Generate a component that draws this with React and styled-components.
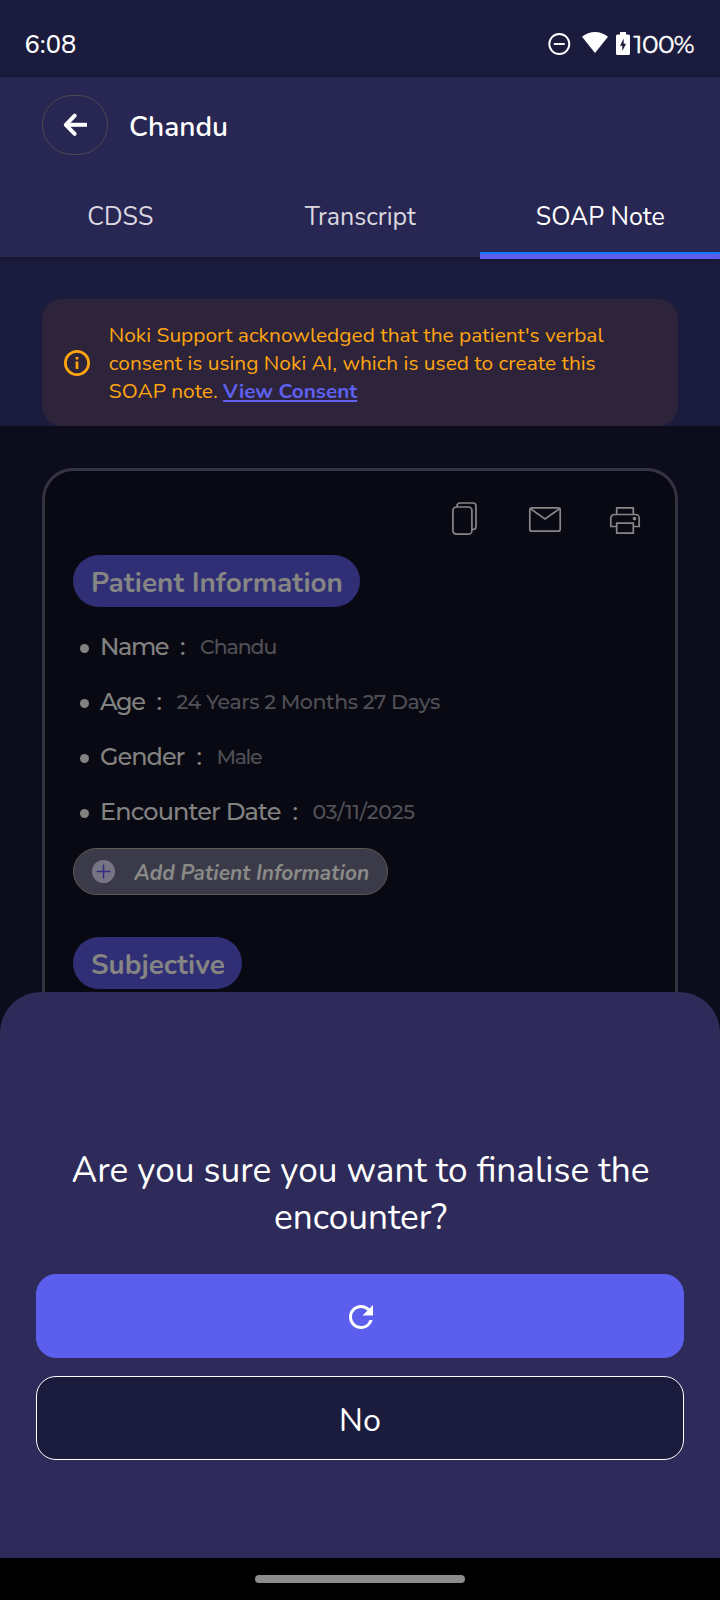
import React from 'react';
import styled, { createGlobalStyle } from 'styled-components';

const GlobalStyle = createGlobalStyle`
  *, *::before, *::after { box-sizing: border-box; }
  body { margin: 0; background: #000; }
  button { font: inherit; color: inherit; margin: 0; padding: 0; border: 0; background: none; }
`;

const textFont = "'Nunito', 'Lato', sans-serif";
const dataFont = "'Montserrat', 'Lato', sans-serif";

const Screen = styled.div`
  position: relative;
  width: 720px;
  height: 1600px;
  overflow: hidden;
  display: flex;
  flex-direction: column;
  background: #0d0c1d;
  font-family: ${textFont};
  color: #fff;
`;

const StatusBar = styled.div`
  flex: none;
  height: 77px;
  padding: 10px 26px 0 24px;
  display: flex;
  align-items: center;
  justify-content: space-between;
  background: #1b1b3d;
`;

const Clock = styled.span`
  padding: 2px 0 0 0.5px;
  font: 500 25.4px/30px ${textFont};
`;

const StatusIcons = styled.div`
  display: flex;
  align-items: center;
`;

const BatteryLevel = styled.span`
  margin-left: 4px;
  font: 400 25px/30px ${dataFont};
  letter-spacing: -0.6px;
  -webkit-text-stroke: 0.4px #fff;
`;

const Header = styled.header`
  position: relative;
  z-index: 1;
  flex: none;
  height: 180px;
  padding-top: 18px;
  display: flex;
  flex-direction: column;
  background: #282652;
  box-shadow: 0 2px 6px rgba(8, 8, 30, 0.35);
`;

const TitleRow = styled.div`
  flex: none;
  height: 60px;
  padding-left: 42px;
  display: flex;
  gap: 21px;
`;

const BackButton = styled.button`
  width: 66px;
  height: 60px;
  display: flex;
  align-items: center;
  justify-content: center;
  border: 1px solid #4c4a50;
  border-radius: 30px;
`;

const PatientName = styled.h1`
  margin: 0;
  padding-top: 3px;
  font-size: 28.1px;
  font-weight: 600;
  line-height: 58px;
`;

const Tabs = styled.nav`
  margin-top: auto;
  display: grid;
  grid-template-columns: repeat(3, 1fr);
`;

const Tab = styled.button`
  position: relative;
  height: 80px;
  padding-left: 0.6px;
  font-size: 25px;
  line-height: 34px;
  color: ${(p) => (p.$active ? '#fff' : '#dcd8e0')};

  &::after {
    content: '';
    display: ${(p) => (p.$active ? 'block' : 'none')};
    position: absolute;
    left: 0;
    right: 0;
    bottom: -2px;
    height: 7px;
    border-top: 2px solid #107cf8;
    background: #5f5df0;
  }
`;

const ConsentArea = styled.section`
  flex: none;
  padding: 42px 42px 0;
  background: #1b1b3d;
`;

const ConsentNotice = styled.div`
  height: 127px;
  padding-left: 22px;
  display: flex;
  align-items: center;
  gap: 18.8px;
  border-radius: 20px;
  background: #2d243b;
`;

const ConsentText = styled.p`
  margin: 0;
  width: 505px;
  font-size: 20.9px;
  line-height: 28px;
  color: #ffa510;
`;

const ConsentLink = styled.a`
  font-size: 20.7px;
  font-weight: 700;
  color: #5f60f0;
  text-decoration: underline;
  text-decoration-thickness: 1.5px;
  text-underline-offset: 2px;
`;

const NoteCard = styled.main`
  flex: 1;
  margin: 42px 42px 0;
  padding: 26px 28px 0;
  display: flex;
  flex-direction: column;
  align-items: flex-start;
  border: 3px solid #343341;
  border-bottom: 0;
  border-radius: 31px 31px 0 0;
  background: #090914;
`;

const NoteActions = styled.div`
  align-self: flex-end;
  width: 188px;
  height: 42px;
  margin-right: 7px;
  display: flex;
  align-items: center;
  justify-content: space-between;
`;

const SectionPill = styled.h2`
  flex: none;
  height: 52px;
  margin: ${(p) => p.$top}px 0 0;
  padding: 4px 17.5px 0 18px;
  border-radius: 26px;
  background: #302f76;
  color: #858583;
  font-size: 27.9px;
  font-weight: 700;
  line-height: 49px;
`;

const Facts = styled.ul`
  margin: 12px 0 9px;
  padding: 0 0 0 6px;
  list-style: none;
`;

const Fact = styled.li`
  height: 55px;
  display: flex;
  align-items: center;
  font: 500 20.5px/30px ${dataFont};
  color: #505055;

  &::before {
    content: '';
    width: 9px;
    height: 9px;
    margin: 4px 11.5px 0 0.5px;
    border-radius: 50%;
    background: #828281;
  }
`;

const FactLabel = styled.span`
  padding-top: 1px;
  font-size: 24px;
  letter-spacing: ${(p) => p.$tracking}px;
  color: #828281;
`;

const FactColon = styled(FactLabel)`
  width: 20px;
  margin-left: 12px;
`;

const FactValue = styled.span`
  padding-top: 1px;
  letter-spacing: ${(p) => p.$tracking}px;
`;

const AddButton = styled.button`
  flex: none;
  height: 47px;
  padding: 0 18px 0 18px;
  display: flex;
  align-items: center;
  gap: 19.3px;
  border: 1px solid #5c5b55;
  border-radius: 24px;
  background: #3b3a48;
  color: #8a8a88;
  font-size: 20.9px;
  font-style: italic;
  font-weight: 700;
`;

const AddLabel = styled.span`
  padding-top: 3px;
  line-height: 30px;
`;

const Sheet = styled.section`
  position: absolute;
  left: 0;
  right: 0;
  bottom: 42px;
  height: 566px;
  padding: 154px 36px 0;
  display: flex;
  flex-direction: column;
  gap: 18px;
  border-radius: 41px 41px 0 0;
  background: #2e2b5a;
`;

const Question = styled.p`
  margin: 0 0 15px;
  padding: 1px 0 0 1px;
  font-size: 35.2px;
  line-height: 47px;
  text-align: center;
`;

const SheetButton = styled.button`
  height: 84px;
  display: flex;
  align-items: center;
  justify-content: center;
  border: 1px solid ${(p) => (p.$primary ? '#5c5eed' : '#fff')};
  border-radius: 20px;
  background: ${(p) => (p.$primary ? '#5c5eed' : '#1b1b3d')};
  font-size: 32.3px;
`;

const ButtonText = styled.span`
  padding-top: 4px;
  line-height: 46px;
`;

const GestureBar = styled.footer`
  position: absolute;
  left: 0;
  right: 0;
  bottom: 0;
  height: 42px;
  display: flex;
  align-items: center;
  justify-content: center;
  background: #000;
`;

const GestureHandle = styled.span`
  width: 210px;
  height: 8px;
  border-radius: 4px;
  background: #8c8c8c;
`;

const Glyph = styled.svg`
  flex: none;
  display: block;
  margin-left: ${(p) => p.$left || 0}px;
  margin-top: ${(p) => p.$top || 0}px;
  overflow: visible;
`;

const facts = [
  { label: 'Name', value: 'Chandu', lt: -1.45, vt: -1.1 },
  { label: 'Age', value: '24 Years 2 Months 27 Days', lt: -1.4, vt: -0.4 },
  { label: 'Gender', value: 'Male', lt: -1.0, vt: -1.35 },
  { label: 'Encounter Date', value: '03/11/2025', lt: -0.86, vt: -0.21 },
];

export default function App() {
  return (
    <Screen>
      <GlobalStyle />
      <StatusBar>
        <Clock>6:08</Clock>
        <StatusIcons>
          <Glyph width="22" height="22" viewBox="0 0 22 22" fill="none" stroke="#fff" strokeWidth="1.9">
            <circle cx="10.3" cy="11" r="10" />
            <path d="M4.8 11h11" />
          </Glyph>
          <Glyph $left={11} $top={-2} width="26" height="21" viewBox="0 0 26 21" fill="#fff">
            <path d="M0 4.8C7.5-1.6 18.5-1.6 26 4.8L13 21Z" />
          </Glyph>
          <Glyph $left={8} width="14" height="23" viewBox="0 0 14 23">
            <path fill="#fff" d="M4 0h6v2.500h2.500A1.500 1.500 0 0 1 14 4v17.500a1.500 1.500 0 0 1-1.500 1.500h-11A1.500 1.500 0 0 1 0 21.500V4a1.500 1.500 0 0 1 1.500-1.500H4Z" />
            <path fill="#1b1b3d" d="M7.7 6.5v5.200h2.400L6.3 19v-5.200H4Z" />
          </Glyph>
          <BatteryLevel>100%</BatteryLevel>
        </StatusIcons>
      </StatusBar>

      <Header>
        <TitleRow>
          <BackButton aria-label="Back">
            <Glyph width="24" height="24" viewBox="0 0 24 24" fill="none" stroke="#fff" strokeWidth="4" strokeLinejoin="round">
              <path strokeLinecap="round" d="M11.7 2.7 2.8 11.8l8.900 9.100" />
              <path d="M3 11.8h21" />
            </Glyph>
          </BackButton>
          <PatientName>Chandu</PatientName>
        </TitleRow>
        <Tabs>
          <Tab>CDSS</Tab>
          <Tab>Transcript</Tab>
          <Tab $active>SOAP Note</Tab>
        </Tabs>
      </Header>

      <ConsentArea>
        <ConsentNotice>
          <Glyph width="26" height="26" viewBox="0 0 26 26" fill="none" stroke="#ffa510" strokeWidth="2.7">
            <circle cx="13" cy="13" r="11.65" />
            <path d="M13 11.4v7.600M13 7v2.500" />
          </Glyph>
          <ConsentText>
            Noki Support acknowledged that the patient's verbal consent is using Noki AI, which is used to create
            this SOAP note. <ConsentLink>View Consent</ConsentLink>
          </ConsentText>
        </ConsentNotice>
      </ConsentArea>

      <NoteCard>
        <NoteActions>
          <Glyph width="25" height="33" viewBox="0 0 25 33" fill="none" stroke="#868686" strokeWidth="1.7">
            <rect x="0.9" y="5" width="19" height="27.2" rx="3.5" />
            <path d="M5 5V4a3 3 0 0 1 3-3h13a3 3 0 0 1 3 3v20.500a3 3 0 0 1-3 3h-1" />
          </Glyph>
          <Glyph $top={3} $left={3} width="32" height="25" viewBox="0 0 32 25" fill="none" stroke="#868686" strokeWidth="1.7">
            <rect x="0.8" y="0.8" width="30.4" height="23.4" rx="2" />
            <path d="m1.5 1.8 14.500 10.200L30.5 1.8" />
          </Glyph>
          <Glyph $top={5} width="30" height="27" viewBox="0 0 30 27" fill="none" stroke="#868686" strokeWidth="1.7">
            <path d="M6.7 7.5V.8h16.600v6.700M6.7 19.5H.8V11a3.500 3.500 0 0 1 3.500-3.500h21.400a3.500 3.500 0 0 1 3.500 3.500v8.500h-5.900" />
            <path d="M6.7 16.2h16.600v10H6.7z" />
            <circle cx="24.5" cy="11.6" r="1" fill="#868686" />
          </Glyph>
        </NoteActions>

        <SectionPill $top={16}>Patient Information</SectionPill>
        <Facts>
          {facts.map((f) => (
            <Fact key={f.label}>
              <FactLabel $tracking={f.lt}>{f.label}</FactLabel>
              <FactColon $tracking={0}>:</FactColon>
              <FactValue $tracking={f.vt}>{f.value}</FactValue>
            </Fact>
          ))}
        </Facts>
        <AddButton>
          <Glyph width="23" height="23" viewBox="0 0 23 23">
            <circle cx="11.5" cy="11.5" r="11.5" fill="#777585" />
            <path d="M4.5 11.5h14M11.5 4.5v14" stroke="#302f80" strokeWidth="1.5" />
          </Glyph>
          <AddLabel>Add Patient Information</AddLabel>
        </AddButton>
        <SectionPill $top={42}>Subjective</SectionPill>
      </NoteCard>

      <Sheet>
        <Question>Are you sure you want to finalise the encounter?</Question>
        <SheetButton $primary aria-label="Working">
          <Glyph $left={1} $top={1} width="24" height="24" viewBox="4 4 16 16" fill="#fff">
            <path d="M17.65 6.35A7.958 7.958 0 0 0 12 4c-4.420 0-7.990 3.580-7.990 8s3.570 8 7.990 8c3.730 0 6.840-2.550 7.730-6h-2.080A5.990 5.990 0 0 1 12 18c-3.310 0-6-2.690-6-6s2.690-6 6-6c1.660 0 3.140.690 4.220 1.780L13 11h7V4l-2.350 2.350z" />
          </Glyph>
        </SheetButton>
        <SheetButton>
          <ButtonText>No</ButtonText>
        </SheetButton>
      </Sheet>

      <GestureBar>
        <GestureHandle />
      </GestureBar>
    </Screen>
  );
}
